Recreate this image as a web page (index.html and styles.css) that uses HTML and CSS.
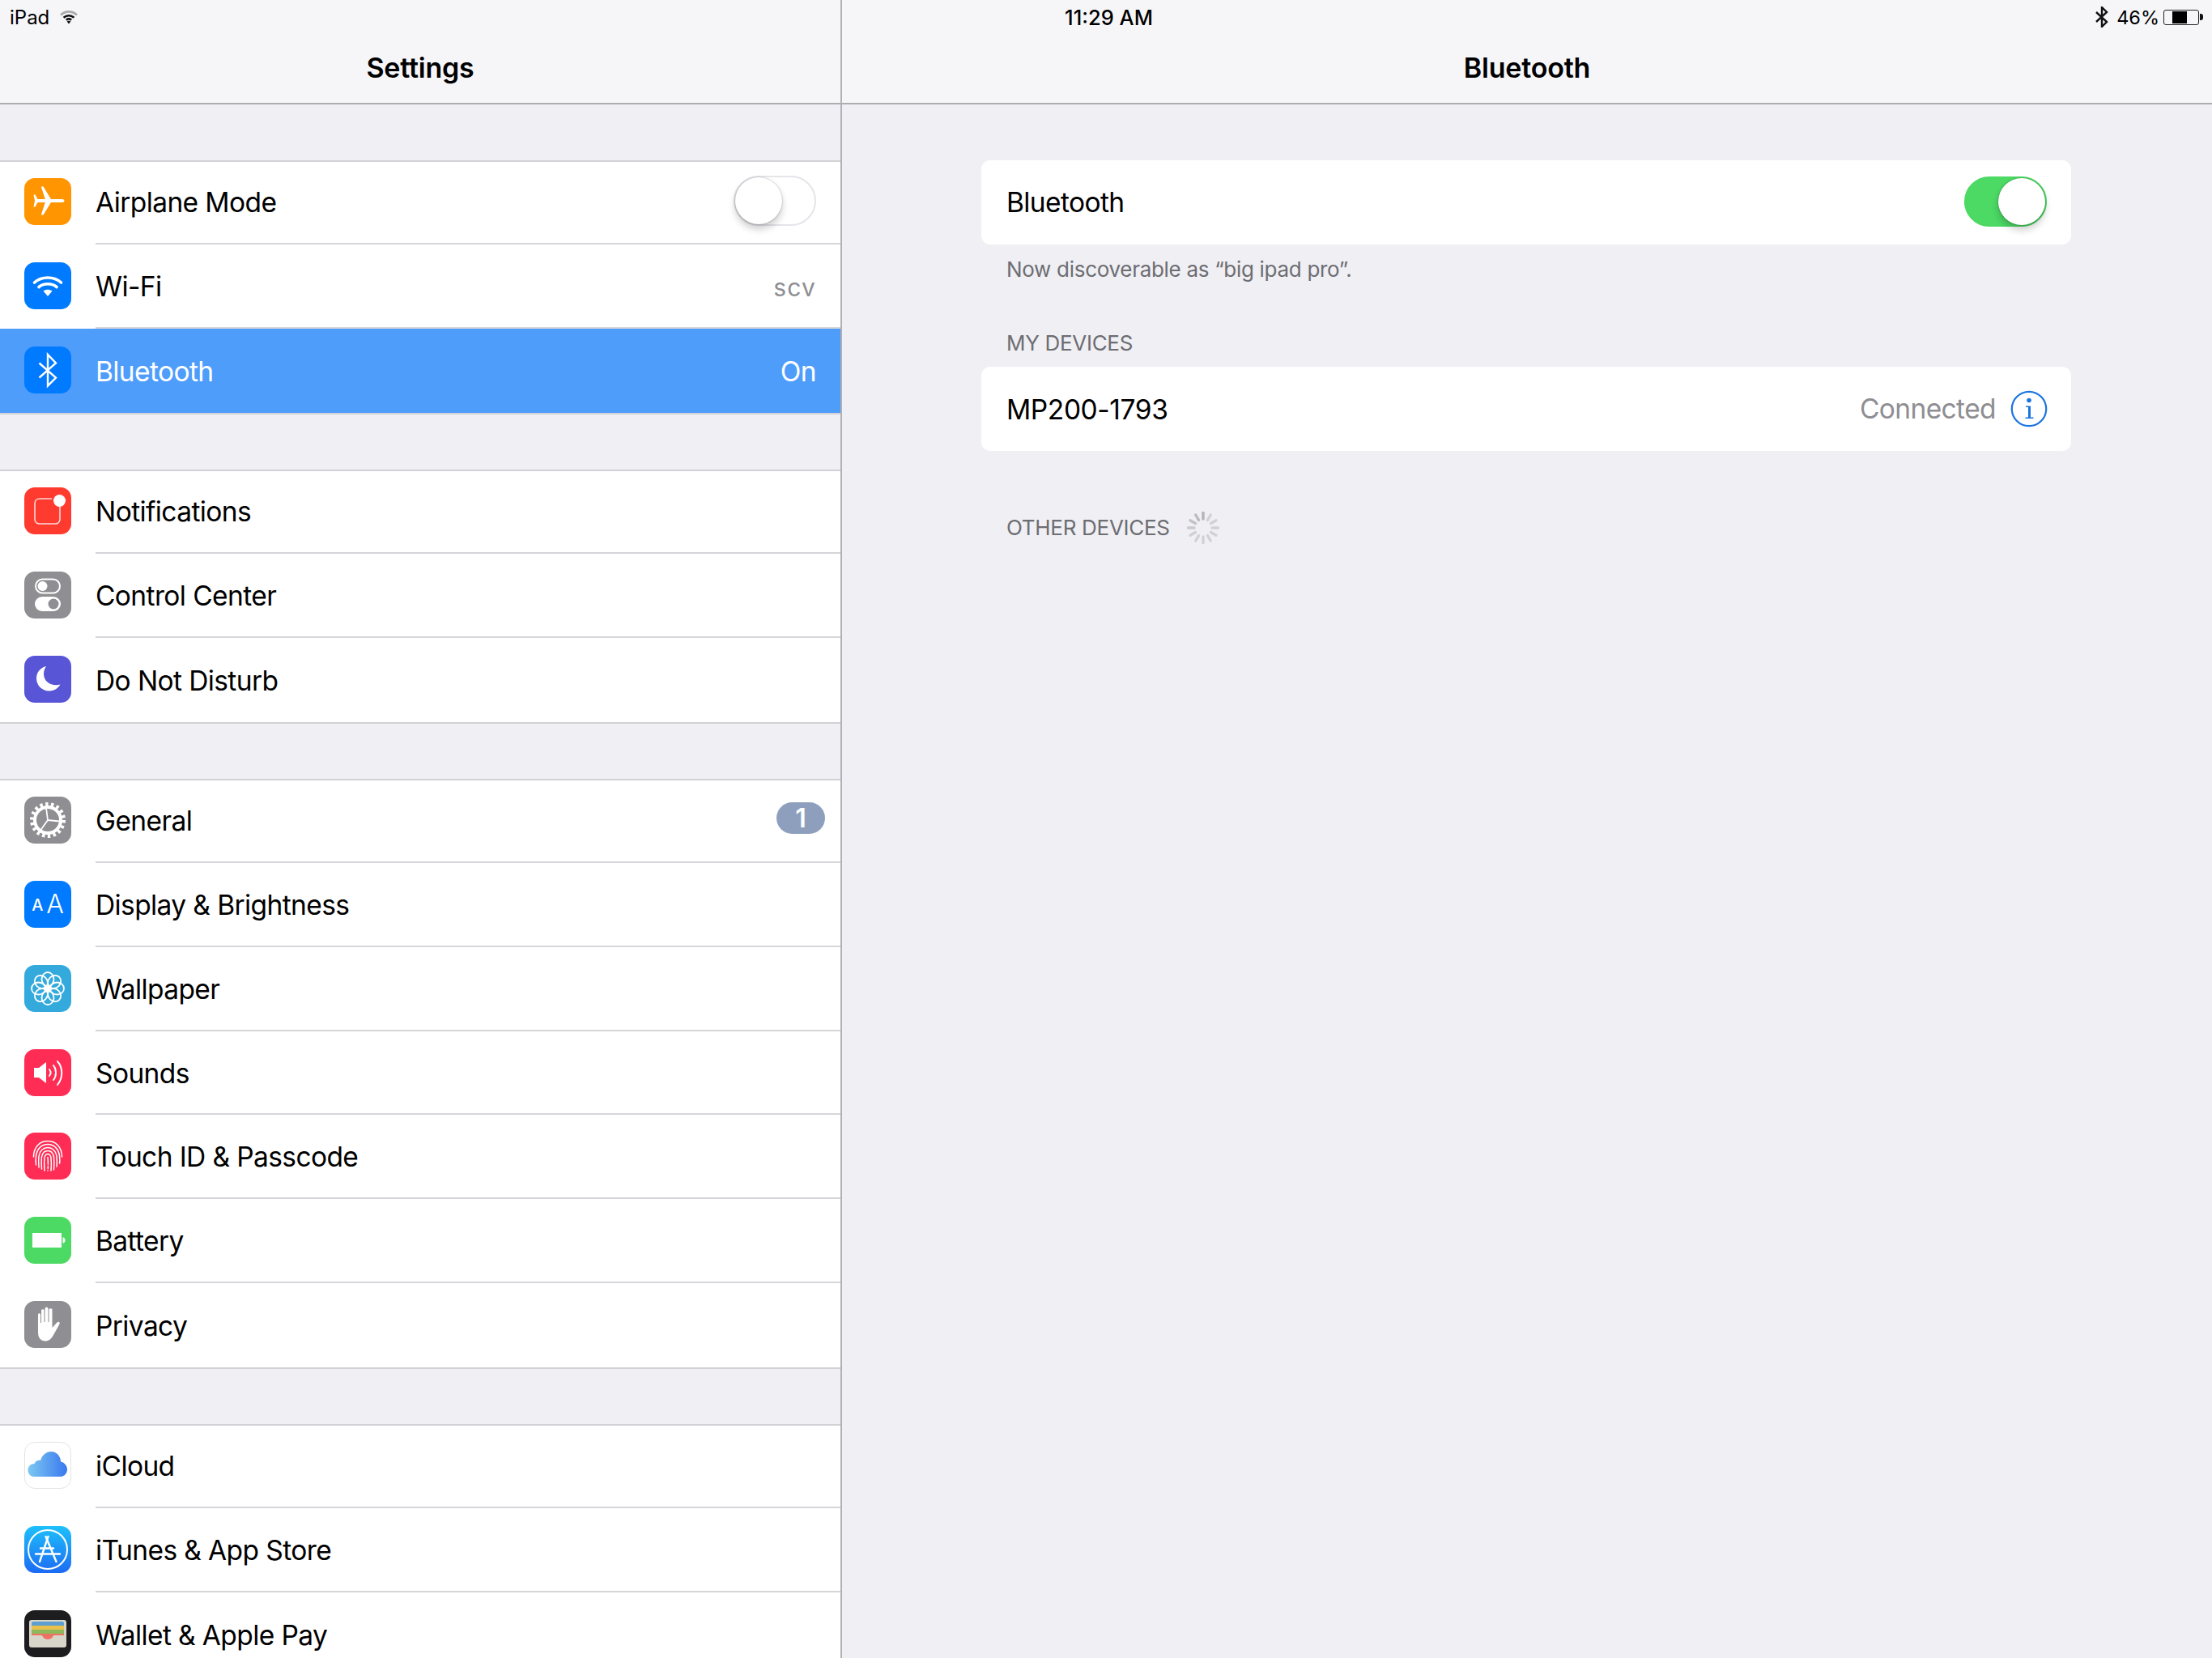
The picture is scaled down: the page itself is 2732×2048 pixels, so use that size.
FILE: index.html
```html
<!DOCTYPE html>
<html lang="en">
<head>
<meta charset="utf-8">
<title>Bluetooth Settings</title>
<link rel="stylesheet" href="styles.css">
</head>
<body>
<div class="app">
  <div class="status">
    <div class="status-left"><span>iPad</span>
      <svg class="st-wifi" viewBox="0 0 24 18" width="24" height="18"><path d="M2 6.500C8 1 16 1 22 6.500" class="arc-dim"/><path d="M5.600 9.800C9.500 6.500 14.500 6.500 18.400 9.800" class="arc-dark"/><path d="M8.800 12.600C11 11 13 11 15.200 12.600" class="arc-dark"/><path d="M12 17.500 9.600 14.400C11 13.500 13 13.500 14.400 14.400Z" class="fill-dark"/></svg>
    </div>
    <div class="status-time">11:29 AM</div>
    <div class="status-right">
      <svg viewBox="0 0 18 26" width="18" height="26"><path d="M2 7 15 19 9 25V1L15 7 2 19" class="line-dark"/></svg>
      <span>46%</span>
      <span class="batt"><span class="batt-fill"></span></span><span class="batt-nub"></span>
    </div>
  </div>

  <aside class="master">
    <header class="nav"><h1 class="nav-title">Settings</h1></header>
    <div class="list">
      <section class="group">
        <div class="row"><span class="icon i-orange"><svg viewBox="0 0 58 58"><path d="M47 26C48.800 26.200 49.500 27.200 49.500 28S48.800 29.800 47 30H33L23.500 45.500H20.800L25.800 30H16.500L13.500 35.500H11.500L13 28 11.500 20.500H13.500L16.500 26H25.800L20.800 10.500H23.500L33 26Z" fill="#fff"/></svg></span>
          <div class="row-body"><span class="label">Airplane Mode</span><span class="toggle"><span class="knob"></span></span></div></div>
        <div class="row"><span class="icon i-blue"><svg viewBox="0 0 58 58"><path d="M12.500 25C21.500 17 36.500 17 45.500 25" class="w-arc"/><path d="M18 30.500C24 25.500 34 25.500 40 30.500" class="w-arc"/><path d="M29 42 23.500 35.500C26.500 33 31.500 33 34.500 35.500Z" fill="#fff"/></svg></span>
          <div class="row-body"><span class="label">Wi-Fi</span><span class="value value-small">scv</span></div></div>
        <div class="row row-selected"><span class="icon i-blue"><svg viewBox="0 0 58 58"><path d="M18.500 20.500 39 38.500 29 48.500V10L39 20.500 18.500 38.500" class="bt-line"/></svg></span>
          <div class="row-body"><span class="label">Bluetooth</span><span class="value">On</span></div></div>
      </section>

      <section class="group">
        <div class="row"><span class="icon i-red"><svg viewBox="0 0 58 58"><path d="M34 14H19C15.500 14 13 16.500 13 20V39C13 42.500 15.500 45 19 45H38C41.500 45 44 42.500 44 39V24" class="n-line"/><circle cx="43.500" cy="16.500" r="7.500" fill="#fff"/></svg></span>
          <div class="row-body"><span class="label">Notifications</span></div></div>
        <div class="row"><span class="icon i-gray"><svg viewBox="0 0 58 58"><rect x="14" y="9.500" width="30" height="17" rx="8.500" class="cc-line"/><circle cx="22.500" cy="18" r="6" fill="#fff"/><rect x="13" y="31" width="32" height="18" rx="9" fill="#fff"/><circle cx="36" cy="40" r="6.500" fill="#8e8e93"/></svg></span>
          <div class="row-body"><span class="label">Control Center</span></div></div>
        <div class="row"><span class="icon i-indigo"><svg viewBox="0 0 58 58"><path d="M27 13C20 14.500 15 20.500 15 28 15 36.500 22 43.500 30.500 43.500 36.500 43.500 41.500 40.500 44.500 35.500 35 38.500 24 33 24 22.500 24 19 25 16 27 13Z" fill="#fff"/></svg></span>
          <div class="row-body"><span class="label">Do Not Disturb</span></div></div>
      </section>

      <section class="group">
        <div class="row"><span class="icon i-gray"><svg viewBox="0 0 58 58"><circle cx="29" cy="29" r="19" class="g-teeth"/><circle cx="29" cy="29" r="16" class="g-ring"/><path d="M29 29 27 14M29 29 43.500 30.500M29 29 20.500 41" class="g-spoke"/></svg></span>
          <div class="row-body"><span class="label">General</span><span class="badge">1</span></div></div>
        <div class="row"><span class="icon i-blue i-aa"><span class="aa-small">A</span><span class="aa-big">A</span></span>
          <div class="row-body"><span class="label">Display &amp; Brightness</span></div></div>
        <div class="row"><span class="icon i-teal"><svg viewBox="0 0 58 58"><g class="petal"><ellipse cx="29" cy="17.500" rx="7.500" ry="8.500"/><ellipse cx="29" cy="17.500" rx="7.500" ry="8.500" transform="rotate(45 29 29)"/><ellipse cx="29" cy="17.500" rx="7.500" ry="8.500" transform="rotate(90 29 29)"/><ellipse cx="29" cy="17.500" rx="7.500" ry="8.500" transform="rotate(135 29 29)"/><ellipse cx="29" cy="17.500" rx="7.500" ry="8.500" transform="rotate(180 29 29)"/><ellipse cx="29" cy="17.500" rx="7.500" ry="8.500" transform="rotate(225 29 29)"/><ellipse cx="29" cy="17.500" rx="7.500" ry="8.500" transform="rotate(270 29 29)"/><ellipse cx="29" cy="17.500" rx="7.500" ry="8.500" transform="rotate(315 29 29)"/></g><circle cx="29" cy="29" r="3.500" fill="#fff"/></svg></span>
          <div class="row-body"><span class="label">Wallpaper</span></div></div>
        <div class="row"><span class="icon i-pink"><svg viewBox="0 0 58 58"><path d="M12 23H18L27 16V42L18 35H12Z" fill="#fff"/><path d="M31 25C33 27.500 33 30.500 31 33M36 20C40 25 40 33 36 38M41 15C48 23 48 35 41 44" class="s-line"/></svg></span>
          <div class="row-body"><span class="label">Sounds</span></div></div>
        <div class="row"><span class="icon i-pink"><svg viewBox="0 0 58 58"><g class="fp"><path d="M11.500 30C11.500 18 19 10.500 29 10.500S46.500 18 46.500 30"/><path d="M14.500 40C14 36 14 33 14.500 29 15.500 20 21.500 14.500 29 14.500S42.500 20 43.500 29C44 33 44 36 43.500 38"/><path d="M18 43C17.500 37 17.500 33 18 29 19 22.500 23.500 18.500 29 18.500S39 22.500 40 29C40.500 34 40.500 38 40 42"/><path d="M21.500 45C21 38 21 34 21.500 30 22.300 25.500 25 22.500 29 22.500S35.700 25.500 36.500 30C37 35 37 40 36.500 46"/><path d="M25 47C24.500 40 24.500 35 25 31 25.500 28 27 26.500 29 26.500S32.500 28 33 31C33.500 36 33.500 41 33 47"/><path d="M29 30.500C29.500 36 29.500 41 29 47" stroke-dasharray="9 2 3 2"/></g></svg></span>
          <div class="row-body"><span class="label">Touch ID &amp; Passcode</span></div></div>
        <div class="row"><span class="icon i-green"><svg viewBox="0 0 58 58"><rect x="10" y="20" width="36" height="18" fill="#fff"/><path d="M47.500 25.500C49.500 25.500 50.500 27 50.500 29S49.500 32.500 47.500 32.500Z" fill="#fff"/></svg></span>
          <div class="row-body"><span class="label">Battery</span></div></div>
        <div class="row"><span class="icon i-gray"><svg viewBox="0 0 58 58"><path d="M17 17C17 14.500 20 14.500 20 17V27H21V12C21 9.500 24.500 9.500 24.500 12V26H25.500V9.500C25.500 7 29.500 7 29.500 9.500V26H30.500V11C30.500 8.500 34.500 8.500 34.500 11V33L40 27C42.500 24.500 45 26.500 43 29.500L36 42C33.500 47 30 49.500 26 49.500 20 49.500 17 45 17 39Z" fill="#fff"/></svg></span>
          <div class="row-body"><span class="label">Privacy</span></div></div>
      </section>

      <section class="group">
        <div class="row"><span class="icon i-white"><svg viewBox="0 0 58 58"><defs><linearGradient id="cloudg" x1="0" y1="0.500" x2="1" y2="0.500"><stop offset="0" stop-color="#7cc8f2"/><stop offset="1" stop-color="#3a78ee"/></linearGradient></defs><path d="M12 43C7 43 4.500 38.500 4.500 35 4.500 30.500 8 27 12.500 27 13.500 24 17 22 20 23 22 16 27.500 12 33 12 40 12 45 18 45 24.500 50 25.500 53 30 53 34 53 39 49 43 45 43Z" fill="url(#cloudg)"/></svg></span>
          <div class="row-body"><span class="label">iCloud</span></div></div>
        <div class="row"><span class="icon i-appstore"><svg viewBox="0 0 58 58"><circle cx="29" cy="29" r="24" class="as-ring"/><path d="M29.500 13 19 44M26.500 13 39.500 44M14 34.500H44M20 27.500H36" class="as-a"/></svg></span>
          <div class="row-body"><span class="label">iTunes &amp; App Store</span></div></div>
        <div class="row"><span class="icon i-wallet"><svg viewBox="0 0 58 58"><rect x="6" y="12" width="46" height="34" rx="3" fill="#d8d5cb"/><path d="M9 16C9 15 10 14 11 14H47C48 14 49 15 49 16V19H9Z" fill="#5d9fd0"/><rect x="9" y="19" width="40" height="5" fill="#e9c04c"/><rect x="9" y="24" width="40" height="5" fill="#8fb85c"/><path d="M9 29H49V31H37C35 31 35 36 29 36S23 31 21 31H9Z" fill="#ee7262"/></svg></span>
          <div class="row-body"><span class="label">Wallet &amp; Apple Pay</span></div></div>
      </section>
    </div>
  </aside>

  <main class="detail">
    <header class="nav"><h1 class="nav-title">Bluetooth</h1></header>
    <div class="content">
      <div class="card"><span class="label">Bluetooth</span><span class="toggle toggle-on"><span class="knob"></span></span></div>
      <p class="note">Now discoverable as “big ipad pro”.</p>
      <h2 class="caption caption-my">MY DEVICES</h2>
      <div class="card card-device"><span class="label">MP200-1793</span>
        <span class="card-right"><span class="value">Connected</span>
          <svg class="info" viewBox="0 0 46 46" width="46" height="46"><circle cx="23" cy="23" r="21.200" class="info-ring"/><circle cx="23" cy="12.500" r="2.800" class="info-fill"/><path d="M19 19.500H25V33.500H28.500V35H18.500V33.500H22V21H19Z" class="info-fill"/></svg>
        </span></div>
      <div class="other-head"><h2 class="caption">OTHER DEVICES</h2>
        <svg class="spinner" viewBox="0 0 40 40" width="40" height="40">
          <path d="M20 1.500V9" opacity="0.62"/><path d="M20 1.500V9" transform="rotate(30 20 20)" opacity="0.3"/><path d="M20 1.500V9" transform="rotate(60 20 20)" opacity="0.3"/><path d="M20 1.500V9" transform="rotate(90 20 20)" opacity="0.3"/><path d="M20 1.500V9" transform="rotate(120 20 20)" opacity="0.3"/><path d="M20 1.500V9" transform="rotate(150 20 20)" opacity="0.3"/><path d="M20 1.500V9" transform="rotate(180 20 20)" opacity="0.3"/><path d="M20 1.500V9" transform="rotate(210 20 20)" opacity="0.3"/><path d="M20 1.500V9" transform="rotate(240 20 20)" opacity="0.32"/><path d="M20 1.500V9" transform="rotate(270 20 20)" opacity="0.38"/><path d="M20 1.500V9" transform="rotate(300 20 20)" opacity="0.46"/><path d="M20 1.500V9" transform="rotate(330 20 20)" opacity="0.54"/>
        </svg>
      </div>
    </div>
  </main>
</div>
</body>
</html>
```
FILE: styles.css
```css
* { box-sizing: border-box; }
html, body { margin: 0; padding: 0; }
body { width: 2732px; height: 2048px; overflow: hidden; background: #efeff4; font-family: Inter, "Noto Sans", sans-serif; color: #000; }
.app { position: relative; display: flex; width: 2732px; height: 2048px; overflow: hidden; }

.status { position: absolute; top: 0; left: 0; right: 0; height: 42px; display: grid; grid-template-columns: 1fr auto 1fr; align-items: center; padding: 0 11px 0 12px; font-size: 24px; z-index: 2; }
.status-left { display: flex; align-items: center; gap: 12px; }
.status-time { font-weight: 500; font-size: 25.500px; padding-left: 6px; }
.status-right { display: flex; align-items: center; justify-content: flex-end; }
.status-right span:first-of-type { margin: 0 5px 0 9px; font-size: 23.500px; }
.st-wifi { display: block; }
.arc-dim { fill: none; stroke: #aaa; stroke-width: 2.6; }
.arc-dark { fill: none; stroke: #111; stroke-width: 2.6; }
.fill-dark { fill: #111; }
.line-dark { fill: none; stroke: #111; stroke-width: 2.4; }
.batt { width: 44px; height: 19px; border: 1px solid #222; border-radius: 3px; padding: 1px; display: block; }
.batt-fill { display: block; width: 46%; height: 100%; background: #000; }
.batt-nub { width: 4px; height: 8px; background: #111; border-radius: 0 3px 3px 0; margin-left: 1px; }

.master { width: 1040px; flex: none; border-right: 2px solid #b0b0b6; height: 100%; overflow: hidden; }
.detail { flex: 1; min-width: 0; height: 100%; }
.nav { height: 129px; background: #f6f6f9; border-bottom: 2px solid #adadb3; padding-top: 60px; display: flex; justify-content: center; }
.nav-title { margin: 0; font-size: 34px; font-weight: 600; line-height: 48px; letter-spacing: -0.2px; }

.list { padding-top: 69px; }
.group { background: #fff; box-shadow: inset 0 2px 0 #d1d1d6; border-bottom: 2px solid #d1d1d6; margin-bottom: 68.500px; }
.row { display: flex; align-items: center; height: 103.850px; padding-left: 30px; }
.row-body { flex: 1; min-width: 0; height: 100%; margin-left: 30px; padding: 2px 30px 0 0; display: flex; align-items: center; justify-content: space-between; border-bottom: 2px solid #d5d5da; }
.row:last-child .row-body { border-bottom: 0; }
.row-selected { background: #4f9dfb; color: #fff; }
.row-selected .row-body { border-bottom: 0; }
.row-selected .value { color: #fff; }

.icon { width: 58px; height: 58px; flex: none; border-radius: 13px; display: block; overflow: hidden; margin-top: -2px; }
.icon svg { display: block; width: 58px; height: 58px; }
.i-orange { background: #ff9500; }
.i-blue { background: #007aff; }
.i-red { background: #ff3b30; }
.i-gray { background: #8e8e93; }
.i-indigo { background: #5856d6; }
.i-teal { background: #34aadc; }
.i-pink { background: #ff2d55; }
.i-green { background: #4cd964; }
.i-white { background: #fff; border: 1px solid #e4e4e6; }
.i-white svg { margin: -1px; }
.i-appstore { background: linear-gradient(#1ec0fb, #1c6bf3); }
.i-wallet { background: #1d1d1f; }
.i-aa { display: flex; align-items: baseline; justify-content: center; color: #fff; line-height: 58px; }
.aa-small { font-size: 20px; font-weight: 500; margin-right: 4px; transform: translateY(-3px); }
.aa-big { font-size: 32px; font-weight: 300; }

.w-arc { fill: none; stroke: #fff; stroke-width: 3.6; stroke-linecap: round; }
.bt-line { fill: none; stroke: #fff; stroke-width: 2.4; }
.n-line { fill: none; stroke: #fff; stroke-width: 1.6; opacity: 0.8; }
.cc-line { fill: none; stroke: #fff; stroke-width: 2; }
.g-teeth { fill: none; stroke: #fff; stroke-width: 6; stroke-dasharray: 3.300 3.330; }
.g-ring { fill: none; stroke: #fff; stroke-width: 4; }
.g-spoke { fill: none; stroke: #fff; stroke-width: 1.800; }
.petal { fill: none; stroke: #fff; stroke-width: 1.800; }
.s-line { fill: none; stroke: #fff; stroke-width: 2; stroke-linecap: round; }
.fp { fill: none; stroke: #fff; stroke-width: 1.500; stroke-linecap: round; }
.as-ring { fill: none; stroke: #fff; stroke-width: 2; }
.as-a { fill: none; stroke: #fff; stroke-width: 2.400; stroke-linecap: round; }

.label { font-size: 33.500px; letter-spacing: -0.6px; white-space: nowrap; }
.value { font-size: 33.500px; letter-spacing: -0.6px; color: #8e8e93; white-space: nowrap; }
.value-small { font-size: 30px; letter-spacing: 1.200px; padding-top: 2px; }
.badge { min-width: 60px; height: 39px; margin: -7px -11px 0 0; border-radius: 20px; background: #8e9fbd; color: #fff; font-size: 32px; font-weight: 600; line-height: 39px; text-align: center; }

.toggle { position: relative; display: block; width: 102px; height: 62px; border-radius: 31px; background: #fff; border: 2px solid #e5e5ea; margin-top: -4px; }
.toggle .knob { position: absolute; left: 0; top: 0; width: 58px; height: 58px; border-radius: 50%; background: #fff; box-shadow: 0 6px 10px rgba(0,0,0,.2), 0 0 2px rgba(0,0,0,.35); }
.toggle-on { background: #4cd964; border-color: #4cd964; }
.toggle-on .knob { left: 40px; }

.content { padding: 69px 174px 0 172px; }
.card { background: #fff; border-radius: 11px; height: 104px; padding: 0 30px 0 31px; display: flex; align-items: center; justify-content: space-between; }
.card .toggle { margin-top: -2px; }
.card-device .label { padding-top: 2px; letter-spacing: -0.4px; }
.note { margin: 13px 0 0 31px; font-size: 26px; line-height: 36px; color: #6d6d72; letter-spacing: -0.3px; }
.caption { margin: 0; font-size: 26px; font-weight: 400; line-height: 36px; color: #6d6d72; letter-spacing: -0.3px; }
.caption-my { margin: 55px 0 11px 31px; }
.card-right { display: flex; align-items: center; gap: 18px; }
.info { display: block; margin-right: -1px; }
.info-ring { fill: none; stroke: #1b74e0; stroke-width: 2.200; }
.info-fill { fill: #1b74e0; }
.other-head { display: flex; align-items: center; gap: 21px; margin: 75px 0 0 31px; }
.spinner { display: block; }
.spinner path { fill: none; stroke: #8e8e93; stroke-width: 3.400; stroke-linecap: round; }
```
